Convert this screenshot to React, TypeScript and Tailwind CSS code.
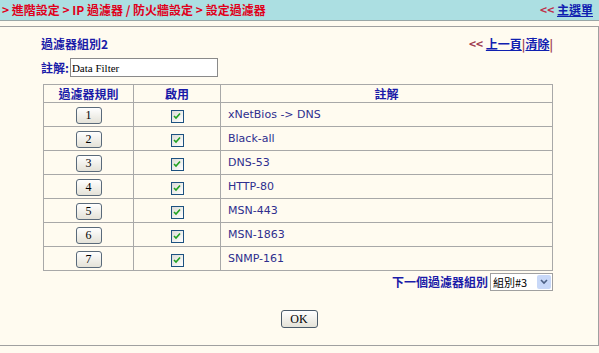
import { useState } from 'react';

const rules = [
  'xNetBios -> DNS',
  'Black-all',
  'DNS-53',
  'HTTP-80',
  'MSN-443',
  'MSN-1863',
  'SNMP-161',
];

const cjk = "font-['Noto_Sans_CJK_TC','Noto_Sans_CJK_SC',sans-serif]";

function Check() {
  return (
    <span className="inline-flex h-[13px] w-[13px] items-center justify-center border border-[#1c5180] bg-gradient-to-br from-[#dcdcd7] to-white">
      <svg viewBox="0 0 8 8" className="h-[8px] w-[8px]">
        <path d="M1 4 L3 6 L7 1.5" fill="none" stroke="#21a121" strokeWidth="1.6" />
      </svg>
    </span>
  );
}

function NumButton({ n }: { n: number }) {
  return (
    <button className="h-[17px] w-[26px] rounded-[3px] border border-[#5a6a7a] bg-gradient-to-b from-white to-[#e4e2d8] font-['Liberation_Serif',serif] text-[12px] leading-[15px] text-black">
      {n}
    </button>
  );
}

export default function App() {
  const [note, setNote] = useState('Data Filter');

  return (
    <div className="h-[353px] w-[599px] overflow-hidden bg-[#fffbf0]">
      <div className="flex h-[21px] items-center justify-between border-b border-[#9aa6a6] bg-[#acdfe2] pl-[2px] pr-[6px]">
        <span className={`${cjk} text-[12px] font-bold text-[#e0001b]`}>
          &gt; 進階設定 &gt; IP 過濾器 / 防火牆設定 &gt; 設定過濾器
        </span>
        <span className={`${cjk} text-[12px] font-bold`}>
          <span className="text-[#c0304a]">&lt;&lt; </span>
          <span className="text-[#1020b0] underline">主選單</span>
        </span>
      </div>
      <div className="mt-[5px] h-[320px] border-t border-r border-b border-[#a0a0a0]">
        <div className="ml-[43px] w-[510px] pt-[8px]">
          <div className="flex items-center justify-between">
            <span className={`${cjk} -ml-[2px] text-[12px] font-bold text-[#1a1aa8]`}>過濾器組別2</span>
            <span className={`${cjk} text-[12px] font-bold`}>
              <span className="text-[#a04050]">&lt;&lt; </span>
              <span className="text-[#1020b0] underline">上一頁</span>
              <span className="text-[#a04050]">|</span>
              <span className="text-[#1020b0] underline">清除</span>
              <span className="text-[#a04050]">|</span>
            </span>
          </div>
          <div className="mt-[5px] flex items-center">
            <span className={`${cjk} -ml-[2px] text-[12px] font-bold text-[#1a1aa8]`}>註解:</span>
            <input
              value={note}
              onChange={(e) => setNote(e.target.value)}
              className="ml-[1px] h-[19px] w-[148px] border border-[#8a8a8a] bg-white px-[1px] font-['Liberation_Serif',serif] text-[11px] text-black outline-none"
            />
          </div>
          <table className="mt-[7px] w-[510px] border-collapse border border-[#a8a8a8]">
            <thead>
              <tr className="h-[18px]">
                <th className={`${cjk} w-[90px] border border-[#a8a8a8] text-[12px] font-bold leading-[16px] text-[#1a1aa8]`}>過濾器規則</th>
                <th className={`${cjk} w-[87px] border border-[#a8a8a8] text-[12px] font-bold leading-[16px] text-[#1a1aa8]`}>啟用</th>
                <th className={`${cjk} border border-[#a8a8a8] text-[12px] font-bold leading-[16px] text-[#1a1aa8]`}>註解</th>
              </tr>
            </thead>
            <tbody>
              {rules.map((r, i) => (
                <tr key={r} className="h-[24px]">
                  <td className="border border-[#a8a8a8] text-center align-middle leading-none">
                    <NumButton n={i + 1} />
                  </td>
                  <td className="border border-[#a8a8a8] text-center align-middle leading-none">
                    <Check />
                  </td>
                  <td className="border border-[#a8a8a8] pl-[7px] font-['DejaVu_Sans',sans-serif] text-[11px] leading-[14px] text-[#2e2e8e]">
                    {r}
                  </td>
                </tr>
              ))}
            </tbody>
          </table>
          <div className="mt-[2px] flex items-center justify-end gap-[2px]">
            <span className={`${cjk} text-[12px] font-bold text-[#1a1aa8]`}>下一個過濾器組別</span>
            <div className="flex h-[18px] w-[63px] items-center justify-between border border-[#a0a0a0] bg-white pl-[2px] pr-[1px]">
              <span className={`${cjk} text-[11px] text-black`}>組別#3</span>
              <span className="flex h-[14px] w-[14px] items-center justify-center rounded-[2px] bg-[#c8d8f8]">
                <svg viewBox="0 0 8 6" className="h-[6px] w-[8px]">
                  <path d="M1 1 L4 4 L7 1" fill="none" stroke="#4d6185" strokeWidth="1.6" />
                </svg>
              </span>
            </div>
          </div>
        </div>
        <div className="mt-[19px] flex justify-center">
          <button className="h-[18px] w-[37px] rounded-[3px] border border-[#4a5a6a] bg-gradient-to-b from-white to-[#e4e2d8] font-['Liberation_Serif',serif] text-[12px] leading-[16px] text-black">
            OK
          </button>
        </div>
      </div>
    </div>
  );
}
